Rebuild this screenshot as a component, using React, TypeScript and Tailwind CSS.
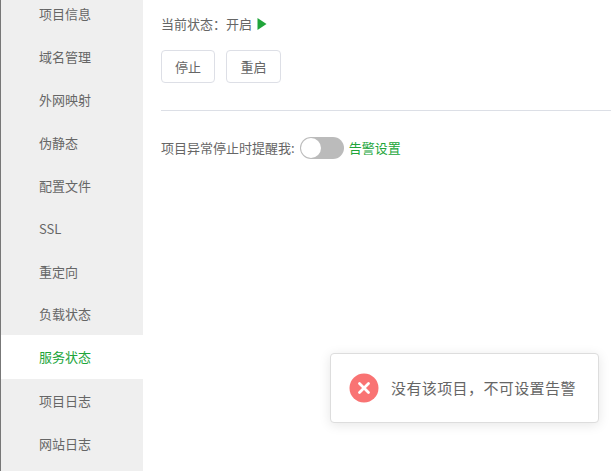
const menuItems = [
  "项目信息",
  "域名管理",
  "外网映射",
  "伪静态",
  "配置文件",
  "SSL",
  "重定向",
  "负载状态",
  "服务状态",
  "项目日志",
  "网站日志",
];

const ACTIVE_ITEM = "服务状态";

function Sidebar() {
  return (
    <div className="w-[143px] shrink-0 border-l border-l-[#777777] bg-[#efefef] overflow-hidden">
      <div className="-mt-[7.8px]">
        {menuItems.map((item) => (
          <div
            key={item}
            className={
              item === ACTIVE_ITEM
                ? "h-[43.6px] pl-[38px] leading-[43.2px] text-[13px] bg-white text-[#20a53a]"
                : "h-[42.9px] pl-[38px] leading-[43.2px] text-[13px] text-[#666666]"
            }
          >
            {item}
          </div>
        ))}
      </div>
    </div>
  );
}

function Toast() {
  return (
    <div className="absolute left-[330px] top-[353px] flex h-[70px] w-[269px] items-center rounded-[4px] border border-[#dddddd] bg-white pl-[18px] shadow-[0_2px_12px_rgba(0,0,0,0.1)]">
      <svg width="30" height="30" viewBox="0 0 30 30" className="shrink-0">
        <circle cx="15" cy="15" r="14.5" fill="#f97373" />
        <path
          d="M10.5 10.5 L19.5 19.5 M19.5 10.5 L10.5 19.5"
          stroke="#ffffff"
          strokeWidth="2.8"
          strokeLinecap="round"
        />
      </svg>
      <span className="ml-[12px] text-[15px] tracking-[0.4px] text-[#666666]">
        没有该项目，不可设置告警
      </span>
    </div>
  );
}

export default function App() {
  return (
    <div
      className="relative flex h-[471px] w-[611px] overflow-hidden bg-white"
      style={{ fontFamily: '"Noto Sans CJK SC", "Liberation Sans", sans-serif' }}
    >
      <Sidebar />
      <div className="flex-1 pl-[18px] pt-[14px] text-[13px] text-[#666666]">
        <div className="flex h-[20px] items-center">
          <span>当前状态：开启</span>
          <svg width="10" height="12" viewBox="0 0 10 12" className="ml-[5px]">
            <path d="M0.5 0 L9.5 6 L0.5 12 Z" fill="#20a53a" />
          </svg>
        </div>
        <div className="mt-[16px] flex gap-[11px]">
          <button className="h-[33px] w-[54px] rounded-[4px] border border-[#dddfe6] bg-white text-[13px] text-[#666666]">
            停止
          </button>
          <button className="h-[33px] w-[55px] rounded-[4px] border border-[#dddfe6] bg-white text-[13px] text-[#666666]">
            重启
          </button>
        </div>
        <div className="mt-[27px] h-px bg-[#dcdfe6]" />
        <div className="mt-[26px] flex h-[22px] items-center">
          <span>项目异常停止时提醒我:</span>
          <div className="ml-[5px] flex h-[22px] w-[44px] items-center rounded-full bg-[#bbbbbb]">
            <div className="ml-[1px] h-[20px] w-[20px] rounded-full bg-white" />
          </div>
          <span className="ml-[5px] text-[#20a53a]">告警设置</span>
        </div>
      </div>
      <Toast />
    </div>
  );
}
